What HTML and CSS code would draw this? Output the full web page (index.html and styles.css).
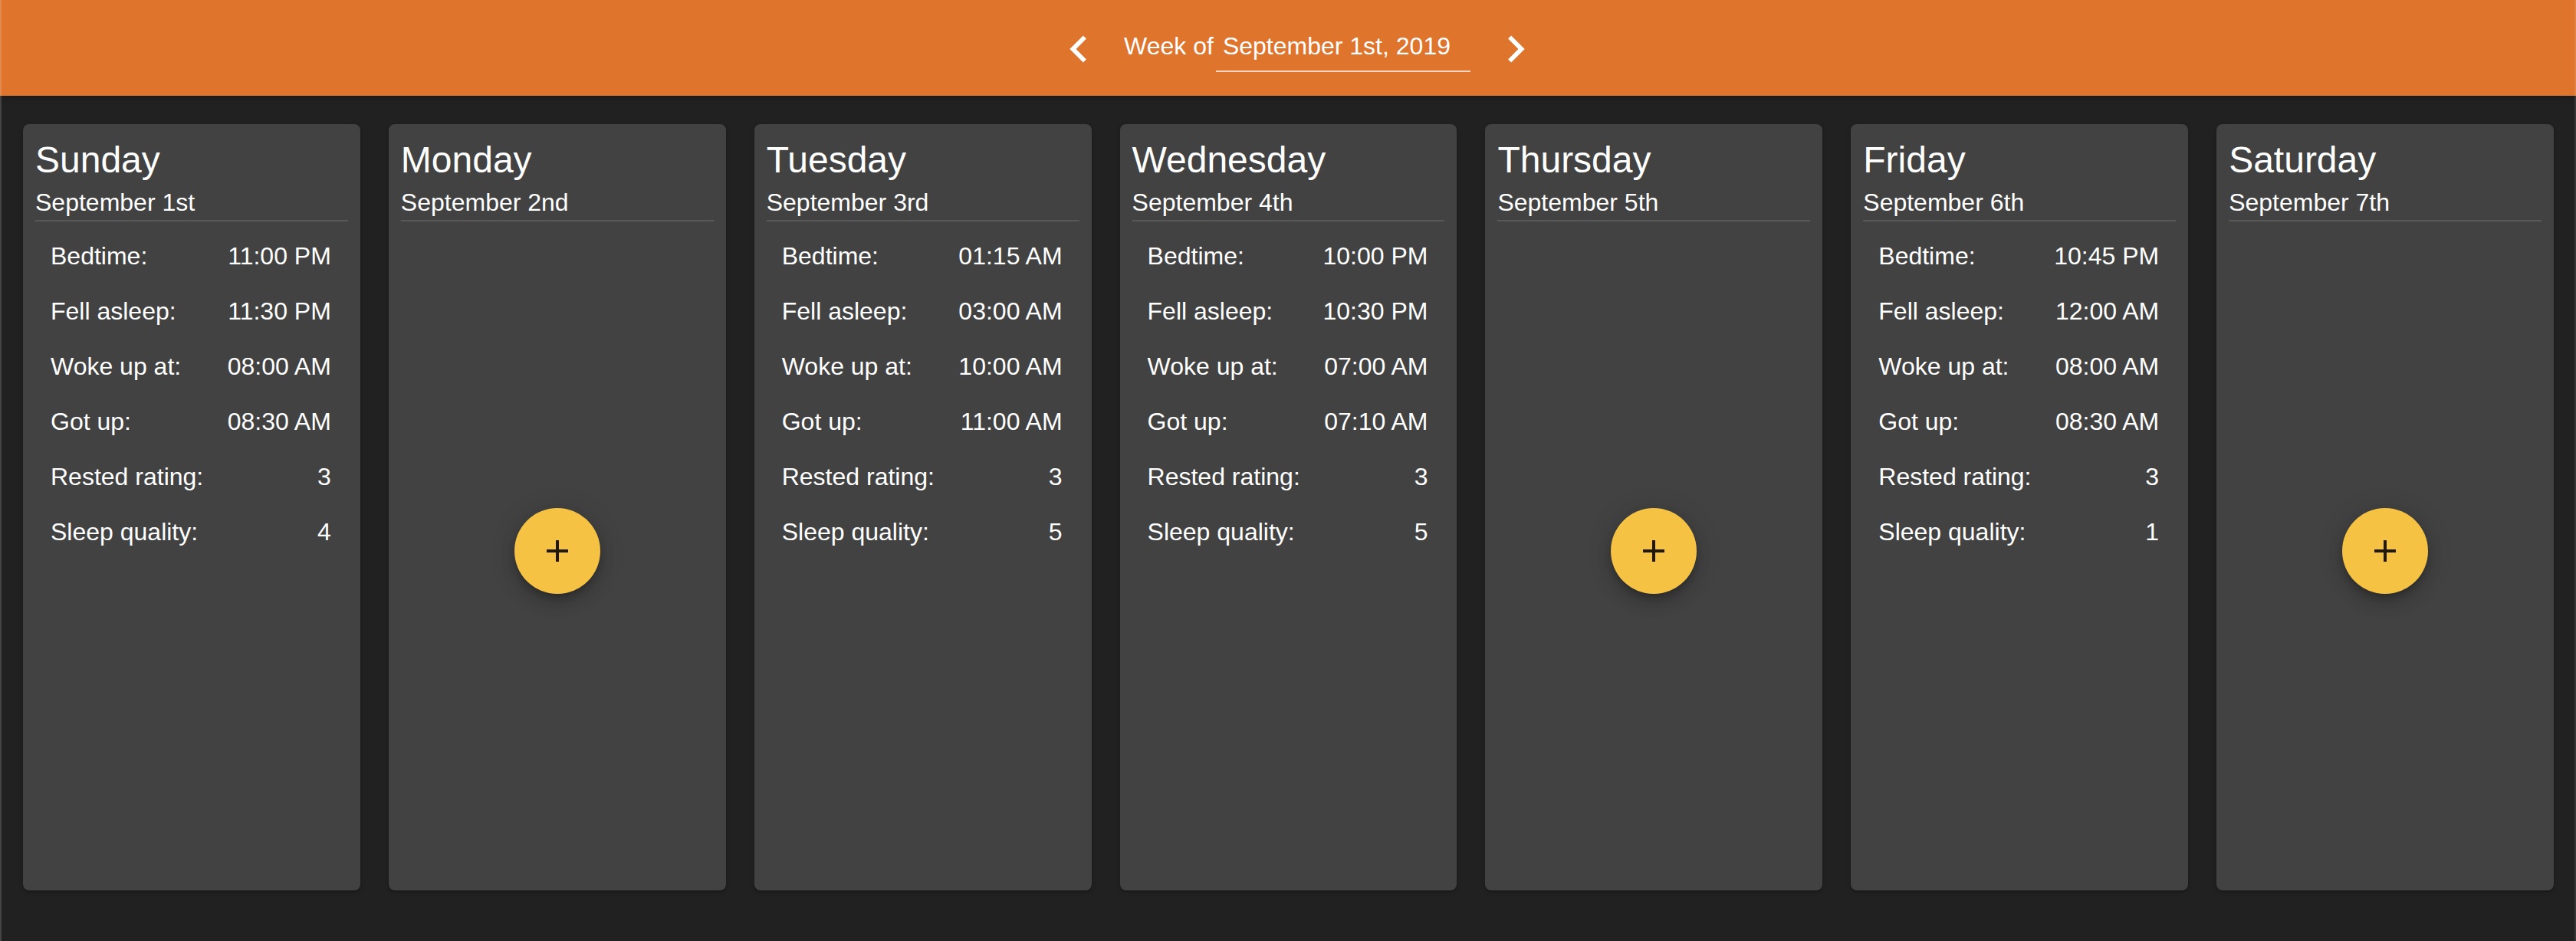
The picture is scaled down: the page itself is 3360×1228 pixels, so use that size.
FILE: index.html
```html
<!DOCTYPE html>
<html lang="en">
<head>
    <meta charset="UTF-8">
    <meta name="viewport" content="width=device-width, initial-scale=1.0">
    <title>Sleep Diary</title>
    <link rel="stylesheet" href="styles.css">
</head>
<body>
    <!-- Верхняя панель с выбором недели -->
    <header class="app-bar">
        <button class="icon-button" type="button" aria-label="Previous week">
            <svg class="chevron" viewBox="0 0 24 24"><path d="M15.41 7.41L14 6l-6 6 6 6 1.41-1.41L10.83 12z"/></svg>
        </button>
        <div class="week-picker">
            <span class="week-label">Week of</span>
            <div class="week-field">September 1st, 2019</div>
        </div>
        <button class="icon-button" type="button" aria-label="Next week">
            <svg class="chevron" viewBox="0 0 24 24"><path d="M10 6L8.59 7.41 13.17 12l-4.58 4.59L10 18l6-6z"/></svg>
        </button>
    </header>

    <main class="week">
        <div class="day-card">
            <h2 class="day-name">Sunday</h2>
            <p class="day-date">September 1st</p>
            <ul class="entry">
                <li><span>Bedtime:</span><span>11:00 PM</span></li>
                <li><span>Fell asleep:</span><span>11:30 PM</span></li>
                <li><span>Woke up at:</span><span>08:00 AM</span></li>
                <li><span>Got up:</span><span>08:30 AM</span></li>
                <li><span>Rested rating:</span><span>3</span></li>
                <li><span>Sleep quality:</span><span>4</span></li>
            </ul>
        </div>

        <div class="day-card">
            <h2 class="day-name">Monday</h2>
            <p class="day-date">September 2nd</p>
            <div class="empty">
                <button class="fab" type="button" aria-label="Add entry">
                    <svg viewBox="0 0 24 24"><path d="M19 13h-6v6h-2v-6H5v-2h6V5h2v6h6v2z"/></svg>
                </button>
            </div>
        </div>

        <div class="day-card">
            <h2 class="day-name">Tuesday</h2>
            <p class="day-date">September 3rd</p>
            <ul class="entry">
                <li><span>Bedtime:</span><span>01:15 AM</span></li>
                <li><span>Fell asleep:</span><span>03:00 AM</span></li>
                <li><span>Woke up at:</span><span>10:00 AM</span></li>
                <li><span>Got up:</span><span>11:00 AM</span></li>
                <li><span>Rested rating:</span><span>3</span></li>
                <li><span>Sleep quality:</span><span>5</span></li>
            </ul>
        </div>

        <div class="day-card">
            <h2 class="day-name">Wednesday</h2>
            <p class="day-date">September 4th</p>
            <ul class="entry">
                <li><span>Bedtime:</span><span>10:00 PM</span></li>
                <li><span>Fell asleep:</span><span>10:30 PM</span></li>
                <li><span>Woke up at:</span><span>07:00 AM</span></li>
                <li><span>Got up:</span><span>07:10 AM</span></li>
                <li><span>Rested rating:</span><span>3</span></li>
                <li><span>Sleep quality:</span><span>5</span></li>
            </ul>
        </div>

        <div class="day-card">
            <h2 class="day-name">Thursday</h2>
            <p class="day-date">September 5th</p>
            <div class="empty">
                <button class="fab" type="button" aria-label="Add entry">
                    <svg viewBox="0 0 24 24"><path d="M19 13h-6v6h-2v-6H5v-2h6V5h2v6h6v2z"/></svg>
                </button>
            </div>
        </div>

        <div class="day-card">
            <h2 class="day-name">Friday</h2>
            <p class="day-date">September 6th</p>
            <ul class="entry">
                <li><span>Bedtime:</span><span>10:45 PM</span></li>
                <li><span>Fell asleep:</span><span>12:00 AM</span></li>
                <li><span>Woke up at:</span><span>08:00 AM</span></li>
                <li><span>Got up:</span><span>08:30 AM</span></li>
                <li><span>Rested rating:</span><span>3</span></li>
                <li><span>Sleep quality:</span><span>1</span></li>
            </ul>
        </div>

        <div class="day-card">
            <h2 class="day-name">Saturday</h2>
            <p class="day-date">September 7th</p>
            <div class="empty">
                <button class="fab" type="button" aria-label="Add entry">
                    <svg viewBox="0 0 24 24"><path d="M19 13h-6v6h-2v-6H5v-2h6V5h2v6h6v2z"/></svg>
                </button>
            </div>
        </div>
    </main>
</body>
</html>
```

FILE: styles.css
```css
body, html {
    margin: 0;
    padding: 0;
    width: 100%;
    min-height: 100%;
    font-family: "Liberation Sans", Arial, sans-serif;
    color: white;
    background-color: #212121;
}

body {
    min-height: 100vh;
}

/* Рамка окна по краям */
body::after {
    content: "";
    position: fixed;
    top: 0;
    bottom: 0;
    left: 0;
    right: 0;
    border-left: 2px solid rgba(255, 255, 255, 0.16);
    border-right: 2px solid rgba(255, 255, 255, 0.1);
    pointer-events: none;
}

/* Верхняя панель */
.app-bar {
    height: 125px;
    display: flex;
    justify-content: center;
    align-items: center;
    padding-left: 24px;
    box-sizing: border-box;
    background-color: #df742d;
    box-shadow: 0 2px 8px rgba(0, 0, 0, 0.25);
}

.icon-button {
    display: flex;
    padding: 0 24px;
    margin-top: 2px;
    border: none;
    background: none;
    cursor: pointer;
}

.chevron {
    width: 70px;
    height: 70px;
    fill: white;
}

.week-picker {
    display: flex;
    align-items: baseline;
    margin-top: 10px;
    font-size: 32px;
}

.week-label {
    margin-right: 3px;
}

.week-field {
    width: 332px;
    box-sizing: border-box;
    line-height: 38px;
    padding: 0 0 13px 9px;
    border-bottom: 2px solid rgba(255, 255, 255, 0.7);
}

/* Карточки дней недели */
.week {
    display: grid;
    grid-template-columns: repeat(7, 1fr);
    gap: 37px;
    padding: 37px 29px 66px 30px;
}

.day-card {
    height: 1000px;
    box-sizing: border-box;
    padding: 15px 16px 16px;
    display: flex;
    flex-direction: column;
    background-color: #424242;
    border-radius: 8px;
    box-shadow: 0 2px 2px -2px rgba(0, 0, 0, 0.2), 0 2px 2px rgba(0, 0, 0, 0.14), 0 2px 6px rgba(0, 0, 0, 0.12);
}

.day-name {
    margin: 0;
    font-size: 48px;
    font-weight: normal;
    line-height: 64px;
}

.day-date {
    margin: 0 0 3px;
    font-size: 32px;
    line-height: 46px;
    padding-bottom: 0;
    border-bottom: 2px solid rgba(255, 255, 255, 0.12);
}

.entry {
    list-style: none;
    margin: 0;
    padding: 6px 22px 0 20px;
}

.entry li {
    display: flex;
    justify-content: space-between;
    font-size: 32px;
    line-height: 72px;
}

/* Пустой день - кнопка добавления */
.empty {
    flex: 1;
    display: flex;
    justify-content: center;
    align-items: center;
}

.fab {
    width: 112px;
    height: 112px;
    border: none;
    border-radius: 50%;
    padding: 0;
    display: flex;
    justify-content: center;
    align-items: center;
    background-color: #f6c244;
    cursor: pointer;
    box-shadow: 0 6px 10px -2px rgba(0, 0, 0, 0.2), 0 12px 20px rgba(0, 0, 0, 0.14), 0 2px 36px rgba(0, 0, 0, 0.12);
}

.fab svg {
    width: 48px;
    height: 48px;
    fill: rgba(0, 0, 0, 0.87);
}
```
